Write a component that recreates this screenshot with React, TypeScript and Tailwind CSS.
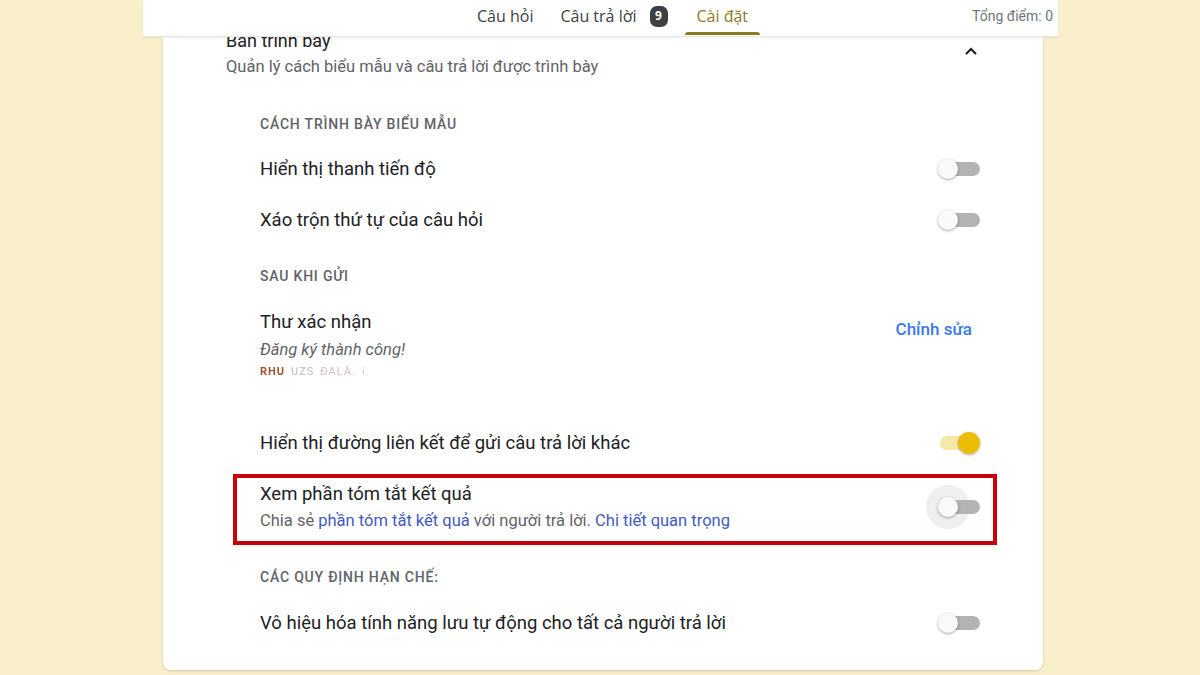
import React from "react";

const Toggle: React.FC<{ on?: boolean; halo?: boolean }> = ({ on, halo }) => {
  return (
    <div className="relative w-[42px] h-[20px] shrink-0">
      {halo && (
        <span className="absolute left-[-12px] top-[-12px] w-[44px] h-[44px] rounded-full bg-[#efefef]" />
      )}
      <span
        className={
          on
            ? "absolute left-[2px] top-[3px] w-[36px] h-[14px] rounded-full bg-[#f6e8a6]"
            : "absolute right-0 top-[3px] w-[36px] h-[14px] rounded-full bg-[#b3b3b3]"
        }
      />
      <span
        className={
          on
            ? "absolute right-0 top-[-1px] w-[22px] h-[22px] rounded-full bg-[#ebbd05] shadow-[0_1px_3px_rgba(0,0,0,0.3)]"
            : "absolute left-0 top-0 w-[20px] h-[20px] rounded-full bg-[#fafafa] shadow-[0_1px_3px_rgba(0,0,0,0.35)]"
        }
      />
    </div>
  );
};

const SectionLabel: React.FC<{ children: React.ReactNode; className?: string }> = ({ children, className }) => (
  <div className={`h-[20px] pl-[27px] flex items-center text-[14px] font-medium tracking-[0.8px] text-[#5f6368] ${className ?? ""}`}>
    {children}
  </div>
);

const Row: React.FC<{ label: string; on?: boolean; className?: string }> = ({ label, on, className }) => (
  <div className={`h-[51px] pl-[27px] pr-[17px] flex items-center justify-between ${className ?? ""}`}>
    <span className="text-[18.5px] text-[#202124] pt-[2px]">{label}</span>
    <Toggle on={on} />
  </div>
);

export default function App() {
  return (
    <div
      className="w-[1200px] h-[675px] bg-[#faefcb] overflow-hidden flex flex-col relative"
      style={{ fontFamily: "Roboto, 'Noto Sans', sans-serif" }}
    >
      {/* top tab bar */}
      <header className="relative z-10 ml-[143px] w-[915px] h-[37px] shrink-0 bg-white border-b border-[#e6e6e6] shadow-[0_1px_2px_rgba(0,0,0,0.06)] flex items-stretch">
        <div
          className="flex items-stretch pl-[334px] text-[16px] text-[#3c4043]"
          style={{ fontFamily: "'Open Sans', Roboto, sans-serif" }}
        >
          <span className="flex items-center pb-[4px]">Câu hỏi</span>
          <span className="flex items-center pb-[4px] ml-[27px]">Câu trả lời</span>
          <span className="flex items-center pb-[4px] ml-[13px]">
            <span className="w-[18px] h-[21px] rounded-[7px] bg-[#3c4043] text-white text-[12px] font-bold flex items-center justify-center">
              9
            </span>
          </span>
          <span className="relative flex items-center pb-[4px] ml-[17px] px-[12px] text-[#8c7a25]">
            Cài đặt
            <span className="absolute left-0 right-0 bottom-[1px] h-[3px] rounded-t bg-[#8c7a1e]" />
          </span>
        </div>
        <span className="ml-auto pr-[5px] pb-[3px] flex items-center text-[14px] text-[#70757a]">Tổng điểm: 0</span>
      </header>

      {/* settings card */}
      <main className="ml-[163px] w-[880px] h-[633px] shrink-0 bg-white rounded-b-[8px] shadow-[0_1px_3px_rgba(0,0,0,0.15)] overflow-hidden">
        <div className="relative -mt-[8px] pl-[63px] pr-[65px]">
          <div className="h-[24px] leading-[24px] text-[18px] text-[#202124]">Bản trình bày</div>
          <div className="mt-[4px] h-[20px] flex items-center text-[16.5px] text-[#5f6368]">
            Quản lý cách biểu mẫu và câu trả lời được trình bày
          </div>
          <svg
            className="absolute right-[65px] top-[17px]"
            width="14"
            height="10"
            viewBox="0 0 14 10"
            fill="none"
          >
            <path d="M2 8 L7 3 L12 8" stroke="#202124" strokeWidth="2.2" />
          </svg>
        </div>

        <div className="ml-[70px] mr-[46px]">
          <SectionLabel className="mt-[37px]">CÁCH TRÌNH BÀY BIỂU MẪU</SectionLabel>
          <Row className="mt-[9px]" label="Hiển thị thanh tiến độ" />
          <Row label="Xáo trộn thứ tự của câu hỏi" />

          <SectionLabel className="mt-[21px]">SAU KHI GỬI</SectionLabel>
          <div className="mt-[25px] pl-[27px] pr-[25px] flex items-start justify-between">
            <div>
              <div className="h-[24px] flex items-center text-[18.5px] text-[#202124]">Thư xác nhận</div>
              <div className="mt-[5px] h-[20px] flex items-center text-[16.5px] italic text-[#5f6368]">
                Đăng ký thành công!
              </div>
              <div className="mt-[4px] h-[16px] flex items-center gap-[6px] text-[11px] tracking-[1px] blur-[0.7px]">
                <span className="text-[#a0522d] font-bold">RHU</span>
                <span className="text-[#c9b8b8]">UZS</span>
                <span className="text-[#cfc3c3]">ĐALÁ.</span>
                <span className="text-[#d8d0d0]">i.</span>
              </div>
            </div>
            <span className="mt-[6px] text-[17px] font-medium text-[#3b78e7]">Chỉnh sửa</span>
          </div>

          <Row className="mt-[37px]" label="Hiển thị đường liên kết để gửi câu trả lời khác" on />

          <div className="mt-[6px] border-[4px] border-[#c8000a] pl-[23px] pr-[13px] pt-[4px] pb-[10px] flex items-center justify-between">
            <div>
              <div className="h-[24px] flex items-center pt-[2px] text-[18.5px] text-[#202124]">Xem phần tóm tắt kết quả</div>
              <div className="mt-[5px] h-[20px] flex items-center text-[16.5px] text-[#5f6368] whitespace-pre">
                Chia sẻ <span className="text-[#3f5bc4]">phần tóm tắt kết quả</span> với người trả lời.{" "}
                <span className="text-[#3f5bc4]">Chi tiết quan trọng</span>
              </div>
            </div>
            <Toggle halo />
          </div>

          <SectionLabel className="mt-[22px]">CÁC QUY ĐỊNH HẠN CHẾ:</SectionLabel>
          <Row className="mt-[10px]" label="Vô hiệu hóa tính năng lưu tự động cho tất cả người trả lời" />
        </div>
      </main>
    </div>
  );
}
